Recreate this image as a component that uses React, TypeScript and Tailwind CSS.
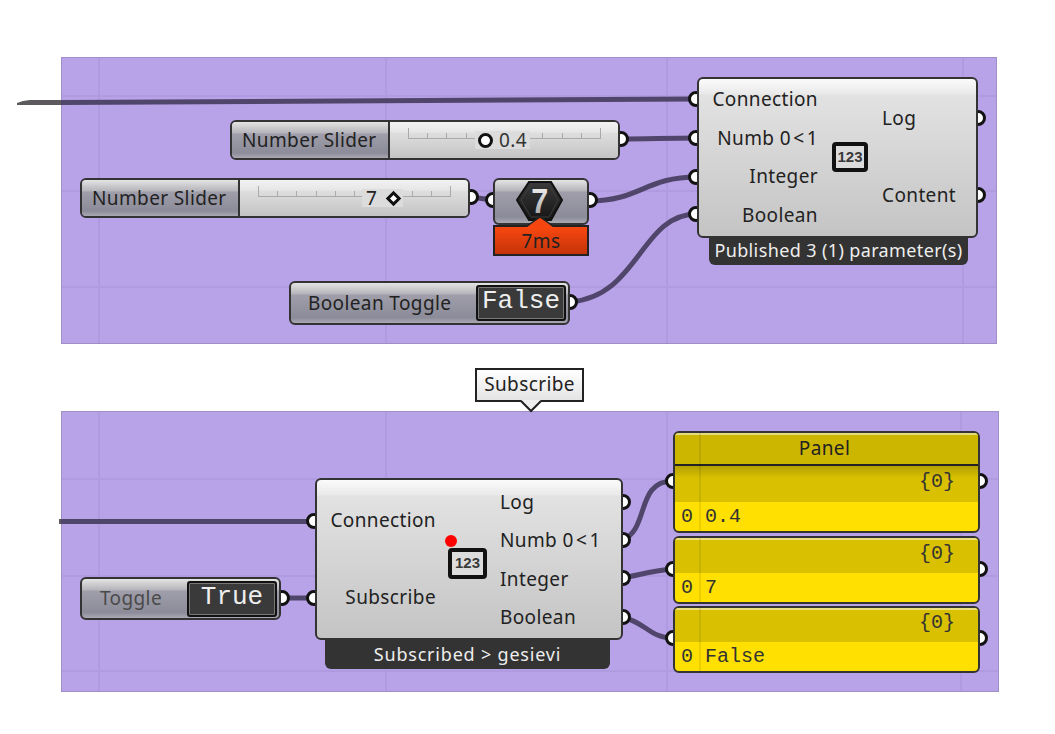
import React from 'react';

const uiFont = "font-['Noto_Sans',sans-serif] tracking-[0.38px]";
const monoFont = "font-['Liberation_Mono',monospace] tracking-normal";
const nodeBg =
  'bg-[linear-gradient(#fbfbfb_0px,#e9e9e9_15px,#e2e2e2_16px,#c4c4c4_100%)]';
const labelBg =
  'bg-[linear-gradient(#e4e4e4_0px,#b4b4ba_11px,#9f9eaa_12px,#8c8b99_86%,#a9a8b3_100%)]';
const sliderBg =
  'bg-[linear-gradient(#f2f2f2_0px,#e6e6e6_10px,#dedede_11px,#c4c4c4_100%)]';

const wires = [
  'M 620 139 C 650 139, 665 138, 697 138',
  'M 470 197 L 493 200',
  'M 589 201 C 640 201, 645 177, 697 177',
  'M 570 302 C 640 296, 640 214, 697 214',
  'M 281 598 L 315 598',
  'M 622 540 C 650 530, 635 481, 673 481',
  'M 622 578 C 640 575, 650 571, 673 569',
  'M 622 617 C 645 622, 650 638, 673 638',
];

const ports = [
  [696, 99],
  [696, 138],
  [696, 177],
  [696, 214],
  [978, 118],
  [978, 195],
  [621, 139],
  [471, 197],
  [493, 200],
  [590, 200],
  [570, 302],
  [314, 521],
  [314, 598],
  [282, 598],
  [623, 502],
  [623, 540],
  [623, 578],
  [623, 617],
  [673, 481],
  [673, 569],
  [673, 638],
  [980, 481],
  [980, 569],
  [980, 638],
];

function Group({ className, vLines, hLines }: { className: string; vLines: number[]; hLines: number[] }) {
  return (
    <div className={`absolute bg-[#b9a3e8] border border-[#a08fc4] ${className}`}>
      {vLines.map((x) => (
        <div key={x} className="absolute top-0 bottom-0 w-[2px] bg-[#b09ae0]" style={{ left: x }} />
      ))}
      {hLines.map((y) => (
        <div key={y} className="absolute left-0 right-0 h-[2px] bg-[#b09ae0]" style={{ top: y }} />
      ))}
    </div>
  );
}

function Badge123({ className }: { className: string }) {
  return (
    <div
      className={`absolute flex items-center justify-center rounded-[4px] border-[4px] border-[#111] bg-[#dcdcdc] text-[15px] font-bold tracking-normal text-[#3a3a3a] font-['Liberation_Sans',sans-serif] ${className}`}
    >
      123
    </div>
  );
}

function Slider({ className, children }: { className: string; children: React.ReactNode }) {
  return (
    <div className={`absolute flex h-[40px] w-[390px] overflow-hidden rounded-[6px] border-2 border-[#333] text-[19px] leading-none text-[#222] ${className}`}>
      <div className={`flex w-[158px] items-center border-r-2 border-[#333] pl-[10px] ${labelBg}`}>Number Slider</div>
      <div className={`relative flex-1 ${sliderBg}`}>
        <div className="absolute left-[18px] right-[17px] top-[7px] flex h-[10px] items-end justify-between border-b border-[#aaa]">
          {Array.from({ length: 11 }).map((_, i) => (
            <div key={i} className="h-[5px] w-px bg-[#aaa] first:h-[10px] last:h-[10px]" />
          ))}
        </div>
        {children}
      </div>
    </div>
  );
}

function PanelRow({ className, dark, value, title }: { className: string; dark: string; value: string; title?: boolean }) {
  return (
    <div className={`absolute w-[307px] overflow-hidden rounded-[6px] border-2 border-[#333] bg-[#ffe000] text-[20px] leading-none text-[#333] ${monoFont} ${className}`}>
      <div className="absolute left-0 right-0 top-0 h-[2px] bg-[#ffffff80]" />
      <div className="absolute bottom-0 left-[24px] top-0 w-[2px] bg-[#00000014]" />
      {title && (
        <div className={`flex h-[33px] items-center justify-center border-b-2 border-[#222] bg-[#cdb600] pr-[4px] text-[19px] text-[#222] ${uiFont}`}>
          Panel
        </div>
      )}
      <div className={`flex items-center justify-end pb-[4px] pr-[23px] ${dark}`}>{'{0}'}</div>
      <div className="flex flex-1 items-center whitespace-pre pl-[6px]">
        <span className="w-[24px]">0</span>
        {value}
      </div>
    </div>
  );
}

function ToggleBox({ label }: { label: string }) {
  return (
    <div className={`flex h-[36px] w-[90px] items-center justify-center rounded-[3px] border-2 border-[#111] bg-[#3a3a3a] pb-[4px] text-[26px] leading-none text-[#eee] shadow-[inset_0_0_0_1px_#777] ${monoFont}`}>
      {label}
    </div>
  );
}

export default function App() {
  return (
    <div className={`relative h-[734px] w-[1055px] overflow-hidden bg-white ${uiFont}`}>
      <Group className="left-[61px] top-[57px] h-[287px] w-[936px]" vLines={[36, 323, 604, 900]} hLines={[37, 132, 228]} />
      <Group className="left-[61px] top-[411px] h-[281px] w-[938px]" vLines={[36, 323, 604, 898]} hLines={[66, 163, 258]} />

      <svg className="absolute left-0 top-0" width={1055} height={734}>
        <polygon points="17,103 23,101 30,100 61,100 61,105 17,105" fill="#5c5a5c" />
        <polygon points="61,100 697,96.5 697,101.5 61,105" fill="#50466b" />
        <rect x={59} y={519} width={2} height={5} fill="#5c5a5c" />
        <rect x={61} y={519} width={254} height={5} fill="#50466b" />
        {wires.map((d) => (
          <path key={d} d={d} fill="none" stroke="#50466b" strokeWidth={5} />
        ))}
        {ports.map(([cx, cy]) => (
          <circle key={`${cx}-${cy}`} cx={cx} cy={cy} r={6.5} fill="#fff" stroke="#111" strokeWidth={3} />
        ))}
      </svg>

      {/* Publisher */}
      <div className="absolute left-[709px] top-[230px] flex h-[35px] w-[259px] items-end justify-center rounded-b-[6px] bg-[#333] pb-[3px] text-[18px] leading-[24px] text-[#eee]">
        Published 3 (1) parameter(s)
      </div>
      <div className={`absolute left-[697px] top-[77px] flex h-[161px] w-[281px] justify-between rounded-[6px] border-2 border-[#333] text-[19px] text-[#222] ${nodeBg}`}>
        <div className="flex w-[119px] flex-col items-end pt-[1px]">
          {['Connection', 'Numb 0\u200A<\u200A1', 'Integer', 'Boolean'].map((t) => (
            <div key={t} className="flex h-[38.5px] items-center">{t}</div>
          ))}
        </div>
        <div className="flex w-[94px] flex-col pt-[1px]">
          {['Log', 'Content'].map((t) => (
            <div key={t} className="flex h-[77px] items-center">{t}</div>
          ))}
        </div>
      </div>
      <Badge123 className="left-[832px] top-[142px] h-[30px] w-[36px]" />

      <Slider className="left-[230px] top-[120px]">
        <div className="flex h-full items-center pl-[85px]">
          <div className="relative flex h-[18px] items-center gap-[6px] bg-[#dcdcdc] px-[3px]">
            <div className="h-[15px] w-[15px] rounded-full border-[3.5px] border-[#111] bg-white" />
            <span className="text-[#333]">0.4</span>
          </div>
        </div>
      </Slider>

      <Slider className="left-[80px] top-[178px]">
        <div className="flex h-full items-center pl-[122px]">
          <div className="relative flex h-[18px] items-center gap-[11px] bg-[#dcdcdc] px-[4px]">
            <span>7</span>
            <div className="h-[11px] w-[11px] rotate-45 border-[3px] border-[#111] bg-white" />
          </div>
        </div>
      </Slider>

      {/* Digit scribble */}
      <div className={`absolute left-[493px] top-[178px] h-[47px] w-[96px] rounded-[6px] border-2 border-[#333] ${labelBg}`} />
      <svg className="absolute left-[493px] top-[178px]" width={96} height={50}>
        <defs>
          <linearGradient id="hexFill" x1="0" y1="0" x2="0" y2="1">
            <stop offset="0" stopColor="#3a3a3a" />
            <stop offset="1" stopColor="#151515" />
          </linearGradient>
          <linearGradient id="sevenFill" x1="0" y1="0" x2="0" y2="1">
            <stop offset="0" stopColor="#ffffff" />
            <stop offset="1" stopColor="#9a9a9a" />
          </linearGradient>
        </defs>
        <polygon points="24,22 36,4 58,4 69,22 58,42 36,42" fill="url(#hexFill)" stroke="#111" strokeWidth={2} />
        <polygon points="28,22 38,7 56,7 65,22 56,39 38,39" fill="none" stroke="#3c3c3c" strokeWidth={1} />
        <text transform="translate(47 35) scale(0.85 1)" textAnchor="middle" fontSize={36} fontWeight={700} fill="url(#sevenFill)" fontFamily="Liberation Sans, sans-serif">7</text>
      </svg>
      <div className="absolute left-[493px] top-[225px] flex h-[31px] w-[96px] items-center justify-center border-2 border-[#222] bg-[linear-gradient(#f8470f,#c5340a)] pt-[1px] text-[19px] text-[#222]">
        7ms
      </div>
      <svg className="absolute left-[525px] top-[216px]" width={30} height={12}>
        <polygon points="2,11 15,1 28,11" fill="#f5460f" />
        <path d="M 2 10 L 15 1 L 28 10" fill="none" stroke="#222" strokeWidth={1.5} />
      </svg>

      {/* Boolean toggle */}
      <div className={`absolute left-[289px] top-[281px] flex h-[44px] w-[281px] items-center justify-between rounded-[6px] border-2 border-[#333] pl-[17px] pr-[2px] text-[19px] text-[#222] ${labelBg}`}>
        Boolean Toggle
        <ToggleBox label="False" />
      </div>

      {/* Tooltip */}
      <div className="absolute left-[475px] top-[368px] flex h-[34px] w-[109px] items-center justify-center border-2 border-[#222] bg-[linear-gradient(#fff,#e4e4e4)] pb-[1px] text-[19px] text-[#222]">
        Subscribe
      </div>
      <svg className="absolute left-[520px] top-[400px]" width={22} height={13}>
        <polygon points="1,0 11,11 21,0" fill="#eee" />
        <path d="M 1 1 L 11 11 L 21 1" fill="none" stroke="#222" strokeWidth={2} />
      </svg>

      {/* Subscriber */}
      <div className="absolute left-[325px] top-[632px] flex h-[37px] w-[285px] items-end justify-center rounded-b-[6px] bg-[#333] pb-[3px] text-[18px] leading-[24px] tracking-[0.8px] text-[#eee]">
        Subscribed &gt; gesievi
      </div>
      <div className={`absolute left-[315px] top-[478px] flex h-[162px] w-[308px] justify-between rounded-[6px] border-2 border-[#333] text-[19px] text-[#222] ${nodeBg}`}>
        <div className="flex w-[119px] flex-col items-end pt-[2px]">
          {['Connection', 'Subscribe'].map((t) => (
            <div key={t} className="flex h-[77px] items-center">{t}</div>
          ))}
        </div>
        <div className="flex w-[121px] flex-col pt-[3px]">
          {['Log', 'Numb 0\u200A<\u200A1', 'Integer', 'Boolean'].map((t) => (
            <div key={t} className="flex h-[38.4px] items-center">{t}</div>
          ))}
        </div>
      </div>
      <Badge123 className="left-[448px] top-[548px] h-[31px] w-[39px]" />
      <div className="absolute left-[445px] top-[535px] h-[12px] w-[12px] rounded-full bg-[#ff0000]" />

      {/* Toggle */}
      <div className={`absolute left-[80px] top-[577px] flex h-[43px] w-[201px] items-center justify-between rounded-[6px] border-2 border-[#333] pl-[18px] pr-[2px] text-[19px] text-[#4a4a4a] ${labelBg}`}>
        Toggle
        <ToggleBox label="True" />
      </div>

      {/* Panels */}
      <PanelRow className="left-[673px] top-[431px] flex h-[102px] flex-col" dark="h-[36px] bg-[linear-gradient(#b3a000_0px,#d9c000_12px)]" value="0.4" title />
      <PanelRow className="left-[673px] top-[536px] flex h-[68px] flex-col" dark="h-[35px] bg-[#d9c000]" value="7" />
      <PanelRow className="left-[673px] top-[606px] flex h-[67px] flex-col" dark="h-[34px] bg-[#d9c000]" value="False" />
    </div>
  );
}
